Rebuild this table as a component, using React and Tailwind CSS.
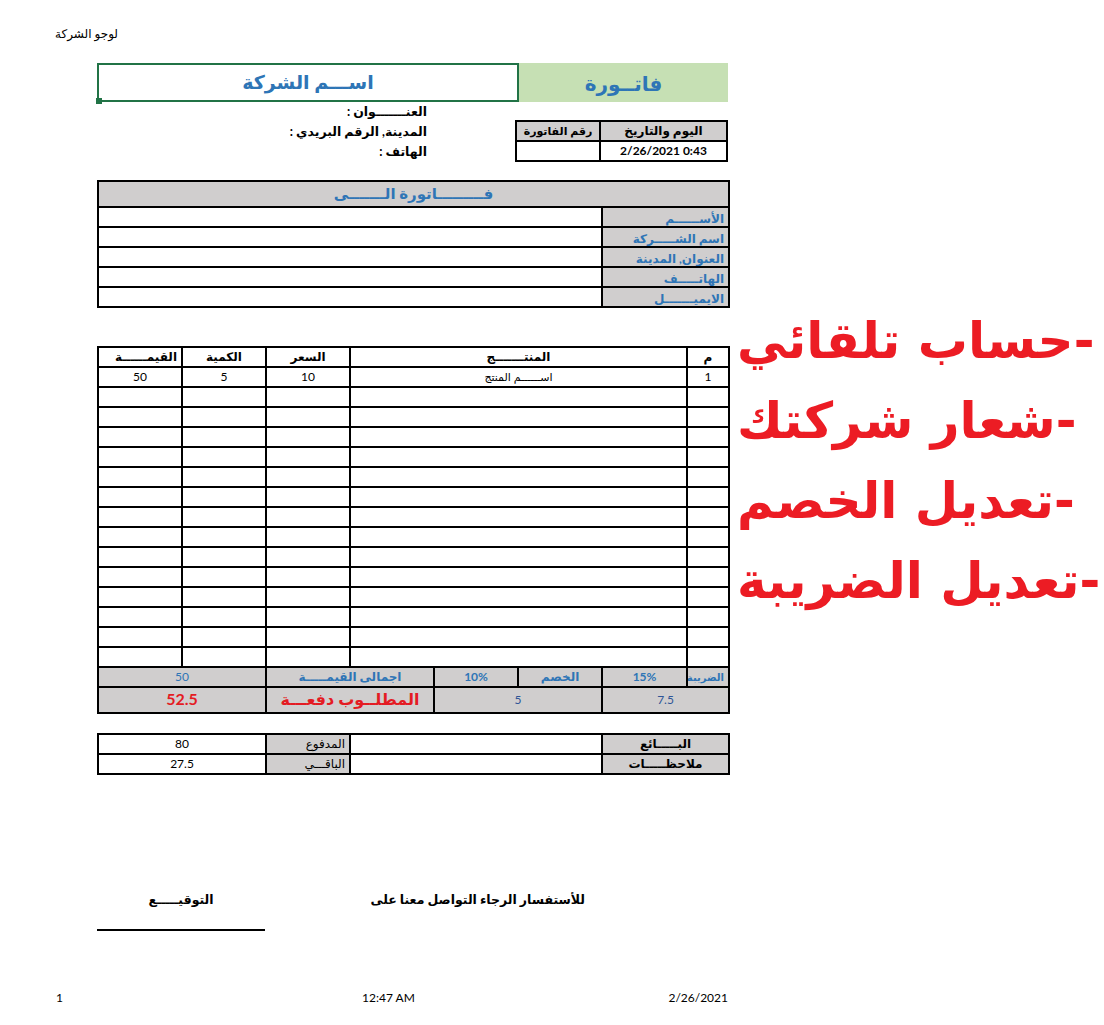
import React from "react";

const cell = "border-2 border-black px-1 py-0 h-[20px] text-[12px] font-bold leading-[14px] text-center whitespace-nowrap overflow-hidden";
const gray = "bg-[#d0cece]";
const blue = "text-[#2e75b6]";

const clientRows = ["الأســــــم", "اسم الشـــــركة", "العنوان, المدينة", "الهاتـــــف", "الايميـــــــل"];
const features = ["-حساب تلقائي", "-شعار شركتك", "-تعديل الخصم", "-تعديل الضريبة"];

export default function App() {
  const emptyRows = Array.from({ length: 14 });

  return (
    <div className="w-[1104px] h-[1025px] bg-white text-black font-['Lato','DejaVu_Sans',sans-serif] overflow-hidden">
      <div className="h-[63px] pl-[55px] pt-[25px] text-[12px]">لوجو الشركة</div>

      <div className="flex">
        {/* ----- invoice column ----- */}
        <div className="ml-[97px] w-[631px] shrink-0 flex flex-col">
          <div className="flex h-[39px]">
            <div className="relative w-[422px] border-2 border-[#217346] flex items-center justify-center">
              <span className={`text-[19px] font-bold ${blue}`} dir="rtl">اســـم الشركة</span>
              <span className="absolute -left-[3px] -bottom-[4px] w-[6px] h-[6px] bg-[#217346]" />
            </div>
            <div className="flex-1 bg-[#c6e0b4] flex items-center justify-center">
              <span className={`text-[20px] font-bold ${blue}`} dir="rtl">فاتــورة</span>
            </div>
          </div>

          <div className="flex">
            <div className="w-[420px] pr-[88px] flex flex-col items-end text-[12.5px] font-bold leading-[20px]" dir="rtl">
              <div className="w-full text-right">العنـــــــوان :</div>
              <div className="w-full text-right">المدينة, الرقم البريدي :</div>
              <div className="w-full text-right">الهاتف :</div>
            </div>
            <table className="mt-[18px] w-[211px] table-fixed border-collapse" dir="rtl">
              <colgroup>
                <col className="w-[127px]" />
                <col className="w-[84px]" />
              </colgroup>
              <tbody>
                <tr>
                  <td className={`${cell} ${gray} px-0 font-semibold`}>اليوم والتاريخ</td>
                  <td className={`${cell} ${gray} px-0 font-semibold`}><span className="text-[11px]">رقم الفاتورة</span></td>
                </tr>
                <tr>
                  <td className={cell}><span dir="ltr">2/26/2021 0:43</span></td>
                  <td className={cell}></td>
                </tr>
              </tbody>
            </table>
          </div>

          <table className="mt-[18px] w-[631px] table-fixed border-collapse" dir="rtl">
            <colgroup>
              <col className="w-[127px]" />
              <col className="w-[504px]" />
            </colgroup>
            <tbody>
              <tr>
                <td colSpan={2} className={`${cell} ${gray} ${blue} h-[26px]`}><span className="text-[15px]">فـــــــــاتورة الـــــــى</span></td>
              </tr>
              {clientRows.map((l) => (
                <tr key={l}>
                  <td className={`${cell} ${gray} ${blue} text-right align-bottom px-0`}>{l}</td>
                  <td className={cell}></td>
                </tr>
              ))}
            </tbody>
          </table>

          <table className="mt-[38px] w-[631px] table-fixed border-collapse" dir="rtl">
            <colgroup>
              <col className="w-[42px]" />
              <col className="w-[85px]" />
              <col className="w-[84px]" />
              <col className="w-[84px]" />
              <col className="w-[84px]" />
              <col className="w-[84px]" />
              <col className="w-[84px]" />
              <col className="w-[84px]" />
            </colgroup>
            <tbody>
              <tr>
                <td className={cell}>م</td>
                <td colSpan={4} className={cell}>المنتـــــــج</td>
                <td className={cell}>السعر</td>
                <td className={cell}>الكمية</td>
                <td className={`${cell} text-right`}>القيمــــــة</td>
              </tr>
              <tr>
                <td className={`${cell} font-normal`}>1</td>
                <td colSpan={4} className={`${cell} font-normal`}><span className="text-[11px]">اســــــم المنتج</span></td>
                <td className={`${cell} font-normal`}>10</td>
                <td className={`${cell} font-normal`}>5</td>
                <td className={`${cell} font-normal`}>50</td>
              </tr>
              {emptyRows.map((_, i) => (
                <tr key={i}>
                  <td className={cell}></td>
                  <td colSpan={4} className={cell}></td>
                  <td className={cell}></td>
                  <td className={cell}></td>
                  <td className={cell}></td>
                </tr>
              ))}
              <tr className={`${gray} ${blue}`}>
                <td className={`${cell} text-right px-0`}><span className="text-[10px] font-semibold tracking-tighter">الضريبة</span></td>
                <td className={cell}>15%</td>
                <td className={cell}>الخصم</td>
                <td className={cell}>10%</td>
                <td colSpan={2} className={cell}>اجمالى القيمـــــة</td>
                <td colSpan={2} className={`${cell} font-normal`}>50</td>
              </tr>
              <tr className={gray}>
                <td colSpan={2} className={`${cell} h-[26px] font-normal text-[#2f5597]`}>7.5</td>
                <td colSpan={2} className={`${cell} font-normal text-[#2f5597]`}>5</td>
                <td colSpan={2} className={`${cell} text-[#e41b23]`}><span className="text-[16px]">المطلــوب دفعـــة</span></td>
                <td colSpan={2} className={`${cell} text-[#e41b23]`}><span className="text-[16px]">52.5</span></td>
              </tr>
            </tbody>
          </table>

          <table className="mt-[19px] w-[631px] table-fixed border-collapse" dir="rtl">
            <colgroup>
              <col className="w-[127px]" />
              <col className="w-[252px]" />
              <col className="w-[84px]" />
              <col className="w-[168px]" />
            </colgroup>
            <tbody>
              <tr>
                <td className={`${cell} ${gray}`}>البـــــائع</td>
                <td className={cell}></td>
                <td className={`${cell} ${gray} text-right font-normal px-0`}>المدفوع</td>
                <td className={`${cell} font-normal`}>80</td>
              </tr>
              <tr>
                <td className={`${cell} ${gray}`}>ملاحظـــــات</td>
                <td className={cell}></td>
                <td className={`${cell} ${gray} text-right font-normal px-0`}>الباقـــي</td>
                <td className={`${cell} font-normal`}>27.5</td>
              </tr>
            </tbody>
          </table>

          <div className="mt-[116px] flex items-start text-[12.5px] font-bold">
            <div className="w-[168px] flex flex-col items-center">
              <span dir="rtl">التوقيـــــع</span>
              <div className="mt-[19px] w-full h-[2px] bg-black" />
            </div>
            <div className="w-[320px] text-right" dir="rtl">للأستفسار الرجاء التواصل معنا على</div>
          </div>
        </div>

        {/* ----- features ----- */}
        <div className="ml-[9px] pt-[238px] flex flex-col items-start text-[50px] font-bold leading-[80px] whitespace-nowrap text-[#ec1c24] font-['DejaVu_Sans',sans-serif]">
          {features.map((f) => (
            <div key={f} dir="rtl">{f}</div>
          ))}
        </div>
      </div>

      <div className="mt-[58px] flex items-center pl-[56px] w-[728px] text-[12px]">
        <span className="w-[306px]">1</span>
        <span className="flex-1">12:47 AM</span>
        <span>2/26/2021</span>
      </div>
    </div>
  );
}
